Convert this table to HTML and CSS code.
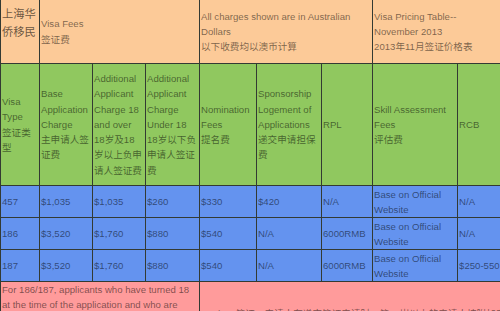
FILE: index.html
```html
<!DOCTYPE html>
<html lang="zh-CN">
<head>
<meta charset="utf-8">
<title>Visa Pricing Table</title>
<link rel="stylesheet" href="styles.css">
</head>
<body>
<table class="fees">
  <colgroup>
    <col class="c1"><col class="c2"><col class="c3"><col class="c4"><col class="c5">
    <col class="c6"><col class="c7"><col class="c8"><col class="c9">
  </colgroup>
  <tr class="head">
    <td class="brand">上海华<br>侨移民</td>
    <td colspan="3">Visa Fees<br>签证费</td>
    <td colspan="3">All charges shown are in Australian<br>Dollars<br>以下收费均以澳币计算</td>
    <td colspan="2">Visa Pricing Table--<br>November 2013<br>2013年11月签证价格表</td>
  </tr>
  <tr class="labels">
    <td>Visa<br>Type<br>签证类<br>型</td>
    <td>Base<br>Application<br>Charge<br>主申请人签<br>证费</td>
    <td>Additional<br>Applicant<br>Charge 18<br>and over<br>18岁及18<br>岁以上负申<br>请人签证费</td>
    <td>Additional<br>Applicant<br>Charge<br>Under 18<br>18岁以下负<br>申请人签证<br>费</td>
    <td>Nomination<br>Fees<br>提名费</td>
    <td>Sponsorship<br>Logement of<br>Applications<br>递交申请担保<br>费</td>
    <td>RPL</td>
    <td>Skill Assessment<br>Fees<br>评估费</td>
    <td>RCB</td>
  </tr>
  <tr class="data">
    <td>457</td><td>$1,035</td><td>$1,035</td><td>$260</td><td>$330</td>
    <td>$420</td><td>N/A</td><td>Base on Official<br>Website</td><td>N/A</td>
  </tr>
  <tr class="data">
    <td>186</td><td>$3,520</td><td>$1,760</td><td>$880</td><td>$540</td>
    <td>N/A</td><td>6000RMB</td><td>Base on Official<br>Website</td><td>N/A</td>
  </tr>
  <tr class="data">
    <td>187</td><td>$3,520</td><td>$1,760</td><td>$880</td><td>$540</td>
    <td>N/A</td><td>6000RMB</td><td>Base on Official<br>Website</td><td>$250-550</td>
  </tr>
  <tr class="note">
    <td colspan="4" class="note-en">For 186/187, applicants who have turned 18<br>at the time of the application and who are<br>not married or in a de facto relationship<br>will be charged as additional applicants.</td>
    <td colspan="5" class="note-zh">186/187签证，申请人在递交签证申请时，第18岁以上的申请人按附加申请人收费。</td>
  </tr>
</table>
</body>
</html>
```

FILE: styles.css
```css
html, body {
  margin: 0;
  padding: 0;
  background: #ffffff;
  overflow: hidden;
}

.fees {
  border-collapse: collapse;
  table-layout: fixed;
  width: 512px;
  font-family: "Liberation Sans", Arial, "Noto Sans CJK SC", sans-serif;
  font-size: 9.6px;
  line-height: 15.3px;
  color: rgba(0, 0, 0, 0.52);
}

.c1 { width: 39px; }
.c2 { width: 53px; }
.c3 { width: 53px; }
.c4 { width: 54px; }
.c5 { width: 57px; }
.c6 { width: 65px; }
.c7 { width: 51px; }
.c8 { width: 85px; }
.c9 { width: 55px; }

.fees td {
  border: 1px solid #333a33;
  padding: 0 1px;
  vertical-align: middle;
  white-space: nowrap;
  overflow: hidden;
}

.head td {
  background: #fcca98;
  height: 63px;
  border-top: none;
}

.head .brand {
  vertical-align: top;
  font-size: 11.3px;
  line-height: 18px;
  padding-top: 5px;
  height: 58px;
  color: rgba(0, 0, 0, 0.6);
}

.labels td {
  background: #90c85f;
  height: 121px;
}

.data td {
  background: #6493ef;
  height: 31px;
  line-height: 15px;
}

.note td {
  background: #ff9b9b;
  vertical-align: top;
  height: 60px;
}

.note-en {
  padding-top: 3px;
}

.note .note-zh {
  white-space: normal;
  padding-top: 24px;
}
```
